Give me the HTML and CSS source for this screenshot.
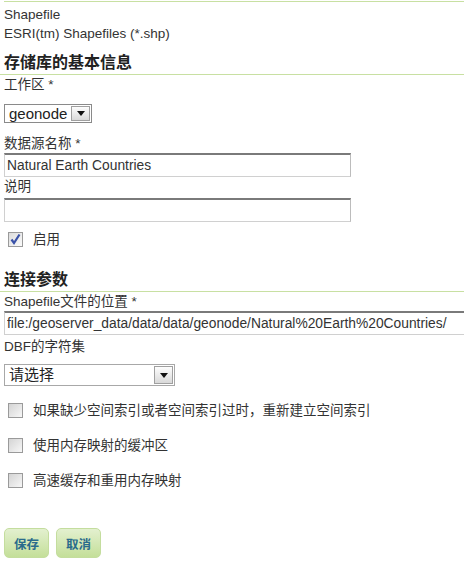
FILE: index.html
```html
<!DOCTYPE html>
<html lang="zh">
<head>
    <meta charset="UTF-8">
    <meta name="viewport" content="width=device-width, initial-scale=1.0">
    <title>新建矢量数据源</title>
    <link rel="stylesheet" href="styles.css">
</head>
<body>
    <div class="top-rule"></div>

    <div class="info">
        <p>Shapefile</p>
        <p>ESRI(tm) Shapefiles (*.shp)</p>
    </div>

    <!-- Basisinfos -->
    <h2 class="section-title first">存储库的基本信息</h2>

    <label class="field-label">工作区 *</label>
    <div class="dropdown workspace">
        <span class="dropdown-value">geonode</span>
        <span class="dropdown-btn"></span>
    </div>

    <label class="field-label gap">数据源名称 *</label>
    <input class="text-input short" type="text" value="Natural Earth Countries">

    <label class="field-label">说明</label>
    <input class="text-input short desc" type="text" value="">

    <div class="check-row enabled">
        <span class="check checked">
            <svg width="13" height="13" viewBox="0 0 13 13"><path d="M2.5 6.5 L5 10 L10.5 1.5" fill="none" stroke="#3a52a8" stroke-width="2.2"/></svg>
        </span>
        <span>启用</span>
    </div>

    <!-- Verbindungsparameter -->
    <h2 class="section-title second">连接参数</h2>

    <label class="field-label">Shapefile文件的位置 *</label>
    <input class="text-input wide" type="text" value="file:/geoserver_data/data/data/geonode/Natural%20Earth%20Countries/">

    <label class="field-label dbf">DBF的字符集</label>
    <div class="dropdown charset">
        <span class="dropdown-value">请选择</span>
        <span class="dropdown-btn"></span>
    </div>

    <div class="check-row options">
        <span class="check"></span>
        <span>如果缺少空间索引或者空间索引过时，重新建立空间索引</span>
    </div>
    <div class="check-row">
        <span class="check"></span>
        <span>使用内存映射的缓冲区</span>
    </div>
    <div class="check-row">
        <span class="check"></span>
        <span>高速缓存和重用内存映射</span>
    </div>

    <div class="buttons">
        <button type="button">保存</button>
        <button type="button">取消</button>
    </div>
</body>
</html>
```

FILE: styles.css
```css
* {
    margin: 0;
    padding: 0;
    box-sizing: border-box;
}
html, body {
    overflow: hidden;
}
body {
    font-family: "Liberation Sans", "Noto Sans CJK SC", sans-serif;
    font-size: 13.5px;
    color: #333;
    background: #fff;
    padding-left: 4px;
}
.top-rule {
    margin-top: 1px;
    height: 1px;
    background: #c8e0a2;
}
.info {
    margin-top: 3px;
    line-height: 19px;
}
/* Abschnittstitel mit gruener Linie */
.section-title {
    font-size: 16px;
    font-weight: bold;
    line-height: 20px;
    color: #222;
    margin-left: -4px;
    padding-left: 4px;
    padding-bottom: 1px;
    border-bottom: 1px solid #c8e0a2;
}
.section-title.first {
    margin-top: 10px;
}
.section-title.second {
    margin-top: 23px;
}
.field-label {
    display: block;
    line-height: 19px;
}
.field-label.gap {
    margin-top: 11px;
}
.field-label.dbf {
    margin-top: 2px;
}
.text-input {
    display: block;
    height: 24px;
    font-family: "Liberation Sans", "Noto Sans CJK SC", sans-serif;
    font-size: 13.8px;
    color: #333;
    padding: 0 2px;
    border: 1px solid #d0d0d0;
    border-top: 2px solid #7a7a7a;
    border-right-color: #bcbcbc;
    outline: none;
}
.text-input.short {
    width: 347px;
}
.text-input.desc {
    margin-top: 2px;
}
.text-input.wide {
    width: 480px;
}
/* Auswahlfelder */
.dropdown {
    display: flex;
    align-items: center;
    border: 1px solid #a8a8a8;
    font-size: 15px;
    color: #222;
}
.dropdown.workspace {
    width: 88px;
    height: 19px;
    margin-top: 10px;
    border-color: #8a8a8a;
}
.dropdown.charset {
    width: 171px;
    height: 22px;
    margin-top: 8px;
}
.dropdown-value {
    flex: 1;
    padding-left: 4px;
    line-height: 16px;
}
.dropdown-btn {
    width: 19px;
    height: calc(100% - 2px);
    margin-right: 1px;
    border: 1px solid #a0a0a0;
    background: linear-gradient(#fdfdfd, #d9d9d9);
    display: flex;
    align-items: center;
    justify-content: center;
}
.dropdown-btn::after {
    content: "";
    border-left: 4px solid transparent;
    border-right: 4px solid transparent;
    border-top: 5px solid #111;
}
/* Checkboxen */
.check-row {
    display: flex;
    align-items: center;
    height: 15px;
    margin-top: 20px;
    line-height: 15px;
}
.check-row.enabled {
    margin-top: 10px;
}
.check-row.options {
    margin-top: 17px;
}
.check {
    width: 15px;
    height: 15px;
    margin-left: 4px;
    margin-right: 10px;
    border: 1px solid #9a9a9a;
    background: linear-gradient(135deg, #d4d4d4, #f7f7f7);
    display: flex;
    align-items: center;
    justify-content: center;
}
.check.checked {
    background: linear-gradient(135deg, #dcdcdc, #fbfbfb);
}
.buttons {
    display: flex;
    gap: 7px;
    margin-top: 40px;
}
.buttons button {
    width: 45px;
    height: 30px;
    font-family: "Liberation Sans", "Noto Sans CJK SC", sans-serif;
    font-size: 12.5px;
    font-weight: bold;
    color: #2a6b8c;
    border: 1px solid #c4dd9e;
    border-radius: 5px;
    background: linear-gradient(#e3f0cf, #c4df99);
    cursor: pointer;
}
```
